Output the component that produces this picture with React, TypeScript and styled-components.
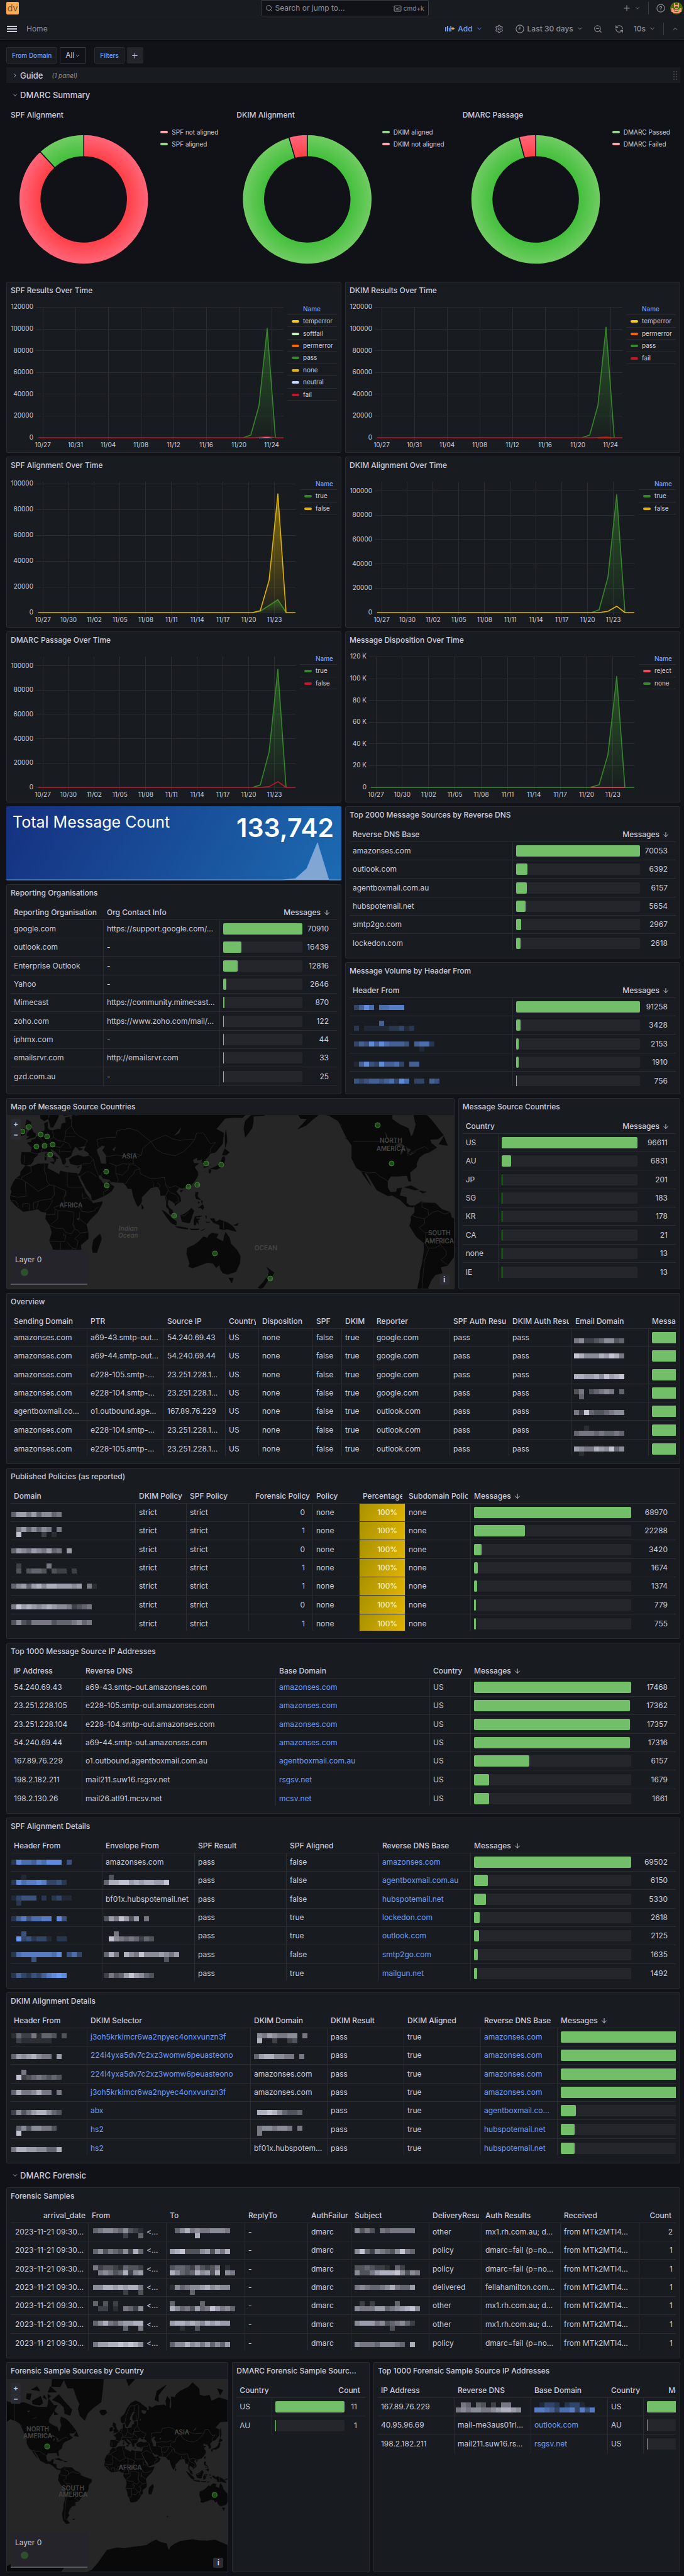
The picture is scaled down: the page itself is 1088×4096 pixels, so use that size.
import React from 'react';
import styled, { createGlobalStyle, css } from 'styled-components';
import { ArrowDown, ChevronDown, ChevronRight, ChevronUp, Keyboard, Plus, RefreshCcw, Search, Settings, ZoomOut } from 'lucide-react';

const c = {
  canvas: '#111217',
  panel: '#181b1f',
  border: '#2a2c31',
  strong: '#3a3c43',
  text: '#ccccdc',
  muted: '#8e8e9a',
  link: '#6e9fff',
  green: '#73bf69',
  track: '#25262b',
};

const Global = createGlobalStyle`
  *, *::before, *::after { box-sizing: border-box; }
  body { margin: 0; background: ${c.canvas}; color: ${c.text}; font-family: Inter, "Liberation Sans", sans-serif; font-size: 12px; line-height: 16px; }
  button, input, select { font: inherit; color: inherit; margin: 0; }
  h1, h2, h3, p { margin: 0; font: inherit; }
  a { color: ${c.link}; text-decoration: none; }
`;

/* ---------- header ---------- */

const TopBar = styled.header`
  display: grid;
  grid-template-columns: 1fr 267px 1fr;
  align-items: center;
  height: 29px;
  padding: 0 2px 2px 10px;
  background: ${c.panel};
  border-bottom: 1px solid ${c.border};
`;

const Logo = styled.a`
  display: grid;
  place-items: center;
  width: 20px;
  height: 20px;
  border-radius: 2px;
  background: #ffab52;
  color: #6a5340;
  font-size: 14px;
  line-height: 18px;
`;

const SearchBox = styled.label`
  display: flex;
  align-items: center;
  gap: 4px;
  height: 26px;
  padding: 0 6px;
  background: ${c.canvas};
  border: 1px solid ${c.strong};
  border-radius: 2px;
  color: ${c.muted};
`;

const SearchInput = styled.input`
  flex: 1;
  min-width: 0;
  padding: 0;
  border: 0;
  outline: 0;
  background: none;
  font-size: 12px;
  &::placeholder { color: ${c.muted}; opacity: 1; }
`;

const Hint = styled.span`
  display: flex;
  align-items: center;
  gap: 3px;
  font-size: 10px;
`;

const Group = styled.div<{ $gap?: number; $end?: boolean }>`
  display: flex;
  align-items: center;
  gap: ${(p) => p.$gap ?? 0}px;
  ${(p) => p.$end && 'justify-content: flex-end;'}
`;

const ToolButton = styled.button<{ $blue?: boolean }>`
  display: flex;
  align-items: center;
  gap: 5px;
  height: 26px;
  padding: 0 8px;
  border: 0;
  background: none;
  color: ${(p) => (p.$blue ? c.link : c.muted)};
  font-weight: 500;
`;

const Divider = styled.span`
  width: 1px;
  height: 20px;
  margin: 0 4px;
  background: ${c.strong};
`;

const NavBar = styled.nav`
  display: flex;
  align-items: center;
  justify-content: space-between;
  height: 34px;
  padding: 0 0 0 3px;
  background: ${c.panel};
  border-bottom: 1px solid ${c.border};
  box-shadow: 0 1px 3px #000;
`;

const HomeLink = styled.a`
  margin-left: 7px;
  color: ${c.muted};
`;

const Bars = styled.span`
  display: grid;
  gap: 2px;
  width: 16px;
  padding-top: 2px;
  &::before, &::after { content: ''; }
  &, &::before, &::after { border-top: 2px solid ${c.text}; }
`;

/* ---------- page ---------- */

const Page = styled.main`
  display: flex;
  flex-direction: column;
  gap: 6px;
  padding: 12px 6px 6px 10px;
`;

const Variables = styled.div`
  display: flex;
  gap: 4px;
  height: 26px;
`;

const VarLabel = styled.label<{ $spaced?: boolean }>`
  display: flex;
  align-items: center;
  padding: 0 8px;
  margin-left: ${(p) => (p.$spaced ? 9 : 0)}px;
  background: ${c.panel};
  border: 1px solid ${c.border};
  border-radius: 2px;
  color: ${c.link};
  font-size: 10px;
  font-weight: 500;
`;

const SelectWrap = styled.span`
  display: grid;
  grid-template-columns: 1fr 10px;
  align-items: center;
  width: 42px;
  padding-right: 7px;
  border: 1px solid ${c.strong};
  border-radius: 2px;
`;

const Select = styled.select`
  appearance: none;
  width: 100%;
  padding: 0 0 0 8px;
  border: 0;
  outline: 0;
  background: none;
`;

const AddFilter = styled.button`
  display: grid;
  place-items: center;
  width: 26px;
  padding: 0;
  border: 0;
  border-radius: 2px;
  background: #24252b;
`;

const RowHead = styled.div<{ $filled?: boolean; $h: number }>`
  display: flex;
  align-items: center;
  justify-content: space-between;
  height: ${(p) => p.$h}px;
  padding: 0 4px 0 9px;
  background: ${(p) => (p.$filled ? c.panel : 'none')};
`;

const RowToggle = styled.button`
  display: flex;
  align-items: center;
  gap: 3px;
  padding: 0;
  border: 0;
  background: none;
  font-size: 13px;
  font-weight: 500;
  line-height: 18px;
`;

const RowNote = styled.em`
  margin-left: 11px;
  color: ${c.muted};
  font-size: 10px;
  font-weight: 400;
`;

const Grid = styled.div`
  display: grid;
  grid-template-columns: repeat(24, minmax(0, 1fr));
  gap: 6px;
`;

const Stack = styled.div<{ $span: number }>`
  grid-column: span ${(p) => p.$span};
  display: flex;
  flex-direction: column;
  gap: 6px;
`;

const PanelBox = styled.section<{ $span: number; $h: number; $clear?: boolean }>`
  grid-column: span ${(p) => p.$span};
  display: flex;
  flex-direction: column;
  min-width: 0;
  height: ${(p) => p.$h}px;
  border: 1px solid ${(p) => (p.$clear ? 'transparent' : c.border)};
  border-radius: 2px;
  background: ${(p) => (p.$clear ? 'none' : c.panel)};
`;

const PanelTitle = styled.h2`
  flex: none;
  height: 26px;
  padding: 0 6px;
  font-size: 12px;
  font-weight: 500;
  line-height: 26px;
  white-space: nowrap;
  overflow: hidden;
  text-overflow: ellipsis;
`;

const PanelBody = styled.div`
  display: flex;
  flex: 1;
  min-height: 0;
  padding: 6px;
`;

const Panel = ({ title, span, h, clear, children }: { title: string; span: number; h: number; clear?: boolean; children: React.ReactNode }) => (
  <PanelBox $span={span} $h={h} $clear={clear}>
    <PanelTitle>{title}</PanelTitle>
    {children}
  </PanelBox>
);

const Swatch = styled.i<{ $c: string }>`
  flex: none;
  display: inline-block;
  width: 12px;
  height: 4px;
  border-radius: 2px;
  background: ${(p) => p.$c};
`;

/* ---------- pies ---------- */

const PieLegend = styled.ul`
  flex: none;
  display: flex;
  flex-direction: column;
  gap: 3px;
  margin: 0;
  padding: 0 9px 0 6px;
  list-style: none;
  font-size: 10px;
  li { display: flex; align-items: center; gap: 6px; }
`;

const PieSvg = styled.svg`
  flex: 1;
  min-width: 0;
  height: 100%;
`;

const arc = (a0: number, a1: number, r: number, ri: number) => {
  const p = (a: number, q: number) => {
    const t = ((a - 90) * Math.PI) / 180;
    return `${(q * Math.cos(t)).toFixed(2)} ${(q * Math.sin(t)).toFixed(2)}`;
  };
  const big = a1 - a0 > 180 ? 1 : 0;
  return `M${p(a0, r)}A${r} ${r} 0 ${big} 1 ${p(a1, r)}L${p(a1, ri)}A${ri} ${ri} 0 ${big} 0 ${p(a0, ri)}Z`;
};

const Pie = ({ id, title, angle, big, labels }: { id: string; title: string; angle: number; big: 'red' | 'green'; labels: [string, string] }) => {
  const small = big === 'red' ? 'green' : 'red';
  const sw = { red: '#ffa6b0', green: '#96d98d' };
  return (
    <Panel title={title} span={8} h={273} clear>
      <PanelBody>
        <PieSvg viewBox="-103 -115 206 233">
          <defs>
            <radialGradient id={`${id}green`} gradientUnits="userSpaceOnUse" cx="0" cy="0" r="102">
              <stop offset=".67" stopColor="#43bf3c" />
              <stop offset="1" stopColor="#70cc62" />
            </radialGradient>
            <radialGradient id={`${id}red`} gradientUnits="userSpaceOnUse" cx="0" cy="0" r="102">
              <stop offset=".67" stopColor="#ff3f47" />
              <stop offset="1" stopColor="#ff6679" />
            </radialGradient>
          </defs>
          <g stroke={c.canvas} strokeWidth="1.5">
            <path d={arc(0, 360 - angle, 103, 68)} fill={`url(#${id}${big})`} />
            <path d={arc(360 - angle, 360, 103, 68)} fill={`url(#${id}${small})`} />
          </g>
        </PieSvg>
        <PieLegend>
          <li><Swatch $c={sw[big]} />{labels[0]}</li>
          <li><Swatch $c={sw[small]} />{labels[1]}</li>
        </PieLegend>
      </PanelBody>
    </Panel>
  );
};

/* ---------- time series ---------- */

const LegendTable = styled.table<{ $w: number; $h: number }>`
  flex: none;
  width: ${(p) => p.$w}px;
  height: ${(p) => p.$h}px;
  border-collapse: separate;
  border-spacing: 0;
  font-size: 10px;
  line-height: 12px;
  th, td { padding: 0; border-bottom: 1px solid ${c.border}; text-align: left; font-weight: 400; }
  thead th { height: 20px; color: ${c.link}; font-weight: 500; }
  td:first-child { width: 25px; padding-left: 7px; line-height: 4px; vertical-align: middle; }
`;

const ChartSvg = styled.svg`
  flex: 1;
  min-width: 0;
  height: 100%;
  font-size: 10px;
  fill: ${c.text};
`;

type Series = { color: string; pts: [number, number][]; fill?: boolean };
type ChartProps = {
  id: string; title: string; w: number; left: number; right: number; yTicks: string[]; step: number;
  xTicks: string[]; x0: number; dx: number; series: Series[]; legend: [string, string][]; lw: number; top: number;
};

const BASE = 215;

const Chart = (p: ChartProps) => {
  const y = (v: number) => BASE - (v / 20000) * p.step;
  return (
    <Panel title={p.title} span={12} h={272}>
      <PanelBody>
        <ChartSvg viewBox={`0 0 ${p.w} 232`} preserveAspectRatio="xMinYMin meet">
          <g stroke="#2b2d31" strokeWidth="1" shapeRendering="crispEdges">
            {p.yTicks.map((_, i) => <path key={i} d={`M${p.left - 4} ${y(i * 20000)}H${p.right}`} />)}
            {p.xTicks.map((_, i) => <path key={i} d={`M${p.x0 + i * p.dx} ${p.top}V${BASE + 4}`} />)}
          </g>
          {p.yTicks.map((t, i) => <text key={t} x={p.left - 8} y={y(i * 20000) + 3} textAnchor="end">{t}</text>)}
          {p.xTicks.map((t, i) => <text key={t} x={p.x0 + i * p.dx} y={230} textAnchor="middle">{t}</text>)}
          {p.series.map((s, i) => {
            const pts = s.pts.map(([a, b]) => `${a} ${y(b)}`).join('L');
            return (
              <g key={i}>
                {s.fill && (
                  <>
                    <linearGradient id={`${p.id}${i}`} x1="0" y1="0" x2="0" y2="1">
                      <stop offset="0" stopColor={s.color} stopOpacity=".55" />
                      <stop offset="1" stopColor={s.color} stopOpacity=".04" />
                    </linearGradient>
                    <path d={`M${pts}Z`} fill={`url(#${p.id}${i})`} />
                  </>
                )}
                <path d={`M${pts}`} fill="none" stroke={s.color} strokeWidth="1.6" strokeLinejoin="round" />
              </g>
            );
          })}
        </ChartSvg>
        <LegendTable $w={p.lw} $h={Math.round(20 + p.legend.length * 19.4)}>
          <thead><tr><th /><th>Name</th></tr></thead>
          <tbody>
            {p.legend.map(([n, col]) => <tr key={n}><td><Swatch $c={col} /></td><td>{n}</td></tr>)}
          </tbody>
        </LegendTable>
      </PanelBody>
    </Panel>
  );
};

const G = '#37872d';
const Y = '#e0b400';
const R = '#c4162a';
const days4 = ['10/27', '10/31', '11/04', '11/08', '11/12', '11/16', '11/20', '11/24'];
const days3 = ['10/27', '10/30', '11/02', '11/05', '11/08', '11/11', '11/14', '11/17', '11/20', '11/23'];
const to120 = ['0', '20000', '40000', '60000', '80000', '100000', '120000'];
const to100 = to120.slice(0, 6);
const wide = { w: 440, left: 44, right: 434, x0: 51, dx: 52, xTicks: days4, yTicks: to120, step: 34.6, top: 7, lw: 79 };
const slim = { w: 460, left: 44, right: 453, x0: 51, dx: 40.94, xTicks: days3, yTicks: to100, top: 7, lw: 59 };

const Charts = () => (
  <>
    <Chart id="a" title="SPF Results Over Time" {...wide}
      series={[
        { color: G, fill: true, pts: [[370, 0], [382, 2500], [395, 29500], [408, 100500], [421, 0]] },
        { color: '#c0d8ff', pts: [[395, 100], [408, 300], [415, 0]] },
        { color: R, pts: [[44, 0], [388, 0], [408, 900], [421, 0], [434, 0]] },
      ]}
      legend={[['temperror', '#f2cc0c'], ['softfail', '#c8f2c2'], ['permerror', '#fa6400'], ['pass', G], ['none', Y], ['neutral', '#c0d8ff'], ['fail', R]]} />
    <Chart id="b" title="DKIM Results Over Time" {...wide}
      series={[
        { color: G, fill: true, pts: [[370, 0], [382, 2500], [395, 29500], [408, 101500], [421, 0]] },
        { color: '#fa6400', pts: [[395, 0], [408, 0], [418, 0]] },
        { color: R, pts: [[44, 0], [388, 0], [408, 500], [421, 0], [434, 0]] },
      ]}
      legend={[['temperror', '#f2cc0c'], ['permerror', '#fa6400'], ['pass', G], ['fail', R]]} />
    <Chart id="c" title="SPF Alignment Over Time" {...slim} step={41}
      series={[
        { color: G, fill: true, pts: [[385, 0], [397, 1000], [411, 5500], [425, 10000], [438, 0]] },
        { color: Y, fill: true, pts: [[44, 0], [385, 0], [397, 1500], [411, 25000], [425, 92000], [438, 0], [453, 0]] },
      ]}
      legend={[['true', G], ['false', Y]]} />
    <Chart id="d" title="DKIM Alignment Over Time" {...slim} step={38.7}
      series={[
        { color: G, fill: true, pts: [[385, 0], [397, 2300], [411, 29000], [425, 97000], [438, 0]] },
        { color: Y, pts: [[44, 0], [397, 0], [411, 1000], [425, 5200], [438, 0], [453, 0]] },
      ]}
      legend={[['true', G], ['false', Y]]} />
    <Chart id="e" title="DMARC Passage Over Time" {...slim} step={38.7}
      series={[
        { color: G, fill: true, pts: [[385, 0], [397, 2000], [411, 29000], [425, 97000], [438, 0]] },
        { color: R, pts: [[44, 0], [397, 0], [411, 600], [425, 4700], [438, 0], [453, 0]] },
      ]}
      legend={[['true', G], ['false', R]]} />
    <Chart id="f" title="Message Disposition Over Time" {...slim} left={35} x0={42} dx={41.87} step={34.6}
      yTicks={['0', '20 K', '40 K', '60 K', '80 K', '100 K', '120 K']}
      series={[
        { color: G, fill: true, pts: [[34, 0], [383, 0], [397, 2500], [411, 30000], [425, 102000], [438, 0], [453, 0]] },
        { color: '#f2495c', pts: [[384, 0], [438, 0]] },
      ]}
      legend={[['reject', '#f2495c'], ['none', G]]} />
  </>
);

/* ---------- stat ---------- */

const StatBox = styled.section`
  display: grid;
  height: 118px;
  border-radius: 2px;
  overflow: hidden;
  background: linear-gradient(120deg, #15307f, #1c6bb2);
  color: #fff;
  > * { grid-area: 1 / 1; }
`;

const StatText = styled.div`
  display: flex;
  justify-content: space-between;
  padding: 9px 12px 0 10px;
`;

const StatName = styled.h2`
  font-size: 25px;
  line-height: 32px;
`;

const StatValue = styled.p`
  font-size: 41px;
  font-weight: 600;
  line-height: 50px;
`;

const Spark = styled.svg`
  width: 100%;
  height: 100%;
`;

/* ---------- tables ---------- */

const Clip = styled.div`
  flex: 1;
  min-width: 0;
  margin-bottom: 6px;
  overflow: hidden;
`;

const DataTable = styled.table<{ $closed?: boolean }>`
  width: 100%;
  table-layout: fixed;
  border-collapse: separate;
  border-spacing: 0;
  thead th { height: 24px; padding: 0 5px; border-bottom: 1px solid ${c.border}; }
  tbody tr:nth-child(3n) td { height: 30px; }
  ${(p) => !p.$closed && css`tbody tr:last-child td { border-bottom: 0; }`}
  td:last-child { border-right: 0; }
`;

const Head = styled.div<{ $end?: boolean; $pad?: number }>`
  display: flex;
  align-items: center;
  gap: 4px;
  justify-content: ${(p) => (p.$end ? 'safe flex-end' : 'flex-start')};
  padding-right: ${(p) => p.$pad ?? 0}px;
  overflow: hidden;
  white-space: nowrap;
  font-weight: 500;
`;

const Cell = styled.td<{ $end?: boolean; $pad?: number; $hot?: boolean }>`
  height: 29px;
  padding: 0 ${(p) => 5 + (p.$pad ?? 0)}px 0 5px;
  border-right: 1px solid ${c.border};
  border-bottom: 1px solid ${c.border};
  text-align: ${(p) => (p.$end ? 'right' : 'left')};
  white-space: nowrap;
  overflow: hidden;
  ${(p) => p.$hot && css`background: linear-gradient(120deg, #a89100, #e0b400); color: #f7f5e6;`}
`;

const BarRow = styled.div`
  display: flex;
  align-items: center;
`;

const Track = styled.div`
  flex: 1;
  height: 18px;
  border-radius: 2px;
  background: ${c.track};
`;

const Fill = styled.div<{ $dim?: boolean }>`
  min-width: 1px;
  height: 100%;
  border-radius: 2px;
  background: ${(p) => (p.$dim ? '#a3a5a8' : c.green)};
`;

const BarValue = styled.span<{ $w: number }>`
  flex: none;
  width: ${(p) => p.$w}px;
  padding-right: 8px;
  text-align: right;
`;

type Mosaic = { m: string[]; y: number; x?: number; blue?: boolean; w?: number; after?: string };
type Bar = { bar: number; v: string; dim?: boolean };
type CellData = string | Mosaic | Bar;
type Col = { h: string; w?: number; end?: boolean; hpad?: number; pad?: number; link?: boolean; sort?: boolean; hot?: boolean; slot?: number };

const WithText = styled.span`
  display: flex;
  align-items: center;
  height: 28px;
`;

const Redacted = ({ d }: { d: Mosaic }) => (
  <WithText>
    <svg width={d.w ?? 104} height="28" overflow="visible" fill={d.blue ? '#6e9fff' : '#ccccdc'} shapeRendering="crispEdges">
      {d.m.map((row, r) =>
        row.split('').map((ch, i) =>
          ch === '.' ? null : <rect key={`${r}-${i}`} x={(d.x ?? 0) + i * 8} y={d.y + r * 8} width="8" height="8" opacity={Number(ch) / 9.5} />,
        ),
      )}
    </svg>
    {d.after}
  </WithText>
);

const m = (y: number, x: number, ...rows: string[]): Mosaic => ({ y, x, m: rows });
const b = (y: number, x: number, ...rows: string[]): Mosaic => ({ y, x, m: rows, blue: true });

const Table = ({ cols, rows, closed }: { cols: Col[]; rows: CellData[][]; closed?: boolean }) => (
  <PanelBody>
    <Clip>
      <DataTable $closed={closed}>
        <colgroup>{cols.map((k) => <col key={k.h} style={k.w ? { width: k.w } : undefined} />)}</colgroup>
        <thead>
          <tr>
            {cols.map((k) => (
              <th key={k.h} scope="col">
                <Head $end={k.end} $pad={k.hpad}>{k.h}{k.sort && <ArrowDown size={12} />}</Head>
              </th>
            ))}
          </tr>
        </thead>
        <tbody>
          {rows.map((r, i) => (
            <tr key={i}>
              {r.map((d, j) => {
                const k = cols[j];
                return (
                  <Cell key={j} $end={k.end && typeof d === 'string'} $pad={k.pad} $hot={k.hot}>
                    {typeof d === 'string' ? (k.link ? <a href="#row">{d}</a> : d)
                      : 'm' in d ? <Redacted d={d} />
                      : (
                        <BarRow>
                          <Track><Fill $dim={d.dim} style={{ width: `${d.bar}%` }} /></Track>
                          <BarValue $w={k.slot ?? 44}>{d.v}</BarValue>
                        </BarRow>
                      )}
                  </Cell>
                );
              })}
            </tr>
          ))}
        </tbody>
      </DataTable>
    </Clip>
  </PanelBody>
);

const bars = (vals: number[], max = vals[0], dimBelow = 0): Bar[] =>
  vals.map((v) => ({ bar: (v / max) * 100, v: String(v), dim: v < dimBelow }));

const dnsRows = (() => {
  const n = ['amazonses.com', 'outlook.com', 'agentboxmail.com.au', 'hubspotemail.net', 'smtp2go.com', 'lockedon.com'];
  const v = bars([70053, 6392, 6157, 5654, 2967, 2618]);
  return n.map((s, i) => [s, v[i]]);
})();

const orgRows = (() => {
  const n = [['google.com', 'https://support.google.com/…'], ['outlook.com', '-'], ['Enterprise Outlook', '-'], ['Yahoo', '-'], ['Mimecast', 'https://community.mimecast…'],
    ['zoho.com', 'https://www.zoho.com/mail/…'], ['iphmx.com', '-'], ['emailsrvr.com', 'http://emailsrvr.com'], ['gzd.com.au', '-']];
  const v = bars([70910, 16439, 12816, 2646, 870, 122, 44, 33, 25], 70910, 200);
  return n.map((s, i) => [...s, v[i]]);
})();

const volumeRows = (() => {
  const n = [b(11, 2, '3586.66777'), b(7, 2, '.....5', '2.1111122312'), b(10, 2, '35485865554.5662', '.............1'), b(13, 2, '1584385563.55'), b(10, 2, '43455456386.33.54')];
  const v = bars([91258, 3428, 2153, 1910, 756]);
  return n.map((s, i) => [s, v[i]]);
})();

const countryRows = (() => {
  const n = ['US', 'AU', 'JP', 'SG', 'KR', 'CA', 'none', 'IE'];
  const v = bars([96611, 6831, 201, 183, 178, 21, 13, 13]);
  return n.map((s, i) => [s, v[i]]);
})();

const overviewRows: CellData[][] = (
  [
    ['amazonses.com', 'a69-43.smtp-out…', '54.240.69.43', 'google.com', m(15, -2, '5622346634')],
    ['amazonses.com', 'a69-44.smtp-out…', '54.240.69.44', 'google.com', m(10, -2, '9866687985')],
    ['amazonses.com', 'e228-105.smtp-…', '23.251.228.1…', 'google.com', m(13, -2, '8877869789')],
    ['amazonses.com', 'e228-104.smtp-…', '23.251.228.1…', 'google.com', m(8, -2, '35.34565.4', '.4')],
    ['agentboxmail.co…', 'o1.outbound.age…', '167.89.76.229', 'outlook.com', m(12, -2, '5294334566')],
    ['amazonses.com', 'e228-104.smtp-…', '23.251.228.1…', 'outlook.com', m(7, -2, '..1', '4555454454')],
    ['amazonses.com', 'e228-105.smtp-…', '23.251.228.1…', 'outlook.com', m(10, -2, '7655876946', '.1')],
  ] as [string, string, string, string, Mosaic][]
).map(([d, p, ip, r, e]) => [d, p, ip, 'US', 'none', 'false', 'true', r, 'pass', 'pass', e, { bar: 100, v: '' }]);

const policyRows: CellData[][] = (() => {
  const n: [Mosaic, string][] = [
    [m(13, -4, '4775746645'), '0'], [m(8, -4, '.5746465.5', '.9....2.1'), '1'], [m(12, -4, '4765765745.7'), '0'], [m(7, -4, '.2.....5', '.3.3443.322.2'), '1'],
    [m(10, -4, '46747868877767.51'), '1'], [m(13, -4, '5978767876652345'), '0'], [m(8, -4, '3632555534445645'), '1'],
  ];
  const v = bars([68970, 22288, 3420, 1674, 1374, 779, 755]);
  return n.map(([d, f], i) => [d, 'strict', 'strict', f, 'none', '100%', 'none', v[i]]);
})();

const ipRows: CellData[][] = (() => {
  const n = [
    ['54.240.69.43', 'a69-43.smtp-out.amazonses.com', 'amazonses.com'], ['23.251.228.105', 'e228-105.smtp-out.amazonses.com', 'amazonses.com'],
    ['23.251.228.104', 'e228-104.smtp-out.amazonses.com', 'amazonses.com'], ['54.240.69.44', 'a69-44.smtp-out.amazonses.com', 'amazonses.com'],
    ['167.89.76.229', 'o1.outbound.agentboxmail.com.au', 'agentboxmail.com.au'], ['198.2.182.211', 'mail211.suw16.rsgsv.net', 'rsgsv.net'],
    ['198.2.130.26', 'mail26.atl91.mcsv.net', 'mcsv.net'],
  ];
  const v = bars([17468, 17362, 17357, 17316, 6157, 1679, 1661]);
  return n.map((s, i) => [...s, 'US', v[i]]);
})();

const spfRows: CellData[][] = (() => {
  const n: [Mosaic, CellData, string, string][] = [
    [b(10, -4, '2866576888.4'), 'amazonses.com', 'false', 'amazonses.com'],
    [b(5, -4, '..1', '28677873342'), m(5, -3, '.3', '4889978788779'), 'false', 'agentboxmail.com.au'],
    [b(8, -4, '1344402.2311', '.2'), 'bf01x.hubspotemail.net', 'false', 'hubspotemail.net'],
    [b(12, -4, '25746677.84'), m(12, -3, '3759737.5'), 'true', 'lockedon.com'],
    [b(7, -4, '..4', '.9342331.22'), m(7, -3, '..5', '.965454243'), 'true', 'outlook.com'],
    [b(10, -4, '2677777768.463', '....4'), m(10, -3, '485.86596667657', '............3'), 'false', 'smtp2go.com'],
    [b(13, -4, '25324357898'), m(13, -3, '2534797643'), 'true', 'mailgun.net'],
  ];
  const v = bars([69502, 6150, 5330, 2618, 2125, 1635, 1492]);
  return n.map(([h, e, a, d], i) => [h, e, 'pass', a, d, v[i]]);
})();

const dkimRows: CellData[][] = (
  [
    [m(8, -4, '142251443.3', '.2111111'), 'j3oh5krkimcr6wa2npyec4onxvunzn3f', m(8, 5, '65765566.5', '8..2..23'), 'amazonses.com', 100],
    [m(12, -4, '47678655.7'), '224i4yxa5dv7c2xz3womw6peuasteono', m(12, 0, '47886655.5'), 'amazonses.com', 100],
    [m(7, -4, '..5', '.923454343'), '224i4yxa5dv7c2xz3womw6peuasteono', 'amazonses.com', 'amazonses.com', 100],
    [m(10, -4, '48556855.5'), 'j3oh5krkimcr6wa2npyec4onxvunzn3f', 'amazonses.com', 'amazonses.com', 100],
    [m(13, -4, '2635788643'), 'abx', m(13, -3, '.889864334'), 'agentboxmail.co…', 12],
    [m(8, -4, '.46366553', '.9'), 'hs2', m(8, -3, '.5665665.5', '.5'), 'hubspotemail.net', 11],
    [m(12, -4, '5887766448'), 'hs2', 'bf01x.hubspotem…', 'hubspotemail.net', 11],
  ] as [Mosaic, string, CellData, string, number][]
).map(([h, s, d, r, v]) => [h, s, d, 'pass', 'true', r, { bar: v, v: '' }]);

const forensicRows: CellData[][] = (
  [
    [['4566546321', '......2..4'], 8, ['.46856556665', '.....8'], ['6353.5455555'], 'other', 'mx1.rh.com.au; d…', '2'],
    [['4635436284'], 12, ['789333673758'], ['694265436954'], 'policy', 'dmarc=fail (p=no…', '1'],
    [['5233214332', '.565348267'], 8, ['3443253235.1', '8643486738.65'], ['3343221.42', '6335788896365'], 'policy', 'dmarc=fail (p=no…', '1'],
    [['6688787885', '......2..3'], 10, ['164566786766', '....4'], ['565445685447'], 'delivered', 'fellahamilton.com…', '1'],
    [['4.3.2', '.22.1.5426'], 7, ['4.....4', '8645374597564'], ['.2.2....4', '6555774567896'], 'other', 'mx1.rh.com.au; d…', '1'],
    [['4685467788', '......4..5'], 8, ['788787687877', '..1..3'], ['677756345642', '.......3'], 'other', 'mx1.rh.com.au; d…', '1'],
    [['5778898986'], 12, ['466867574647'], ['6555466654.8'], 'policy', 'dmarc=fail (p=no…', '1'],
  ] as [string[], number, string[], string[], string, string, string][]
).map(([f, y, t, s, d, a, n]) => [
  '2023-11-21 09:30…', { m: f, y, x: 2, w: 87, after: '<…' }, m(y, 0, ...t), '-', 'dmarc', m(y, 0, ...s), d, a, 'from MTk2MTI4…', n,
]);

/* ---------- maps ---------- */

const LAND = [
  '-9,37 -9.5,39 -8.8,43.5 -1.8,43.4 -1.2,46 -4.7,48.4 -1.5,48.7 -1.5,49.7 1.5,50.2 2,51 4,52 5,53.4 8,53.8 8.5,55 8,57 10.5,57.7 10.5,55 12,54.3 14,54 18,54.7 20,54.5 21,57 24,57.3 23.5,59.3 29.5,59.8 28,60.5 22.5,60 21.3,61 21.5,63 25,65.3 22,65.8 17.5,62 17.2,60.5 18.8,60 16.5,57.5 14.5,55.5 12.8,55.5 11,59 8,58 5.3,59 5,62 10,64 14,67.5 19,70 25.5,71.1 31,70.3 41,67.5 40.5,66.3 33,66.6 34,65 37,64 40,64.7 41,66.5 44,66.3 44,68.5 48,67.7 53,68.8 60,69 65,69.2 68,68.3 67,71 69,73 73,71.5 72,68 74,67 75,69 74.5,72.8 80,72.5 81,73.6 87,75 98,76.3 104,77.7 113,75.8 113.5,73.6 120,73 127,73.5 130,71 140,72.4 150,71.6 160,69.8 170,69 180,68.9 190,66 188,64.5 180,64.5 177,62.5 171,60 163,59.8 163,57.5 162,55 157,51 156,55 157,58 162,60.5 160,61.7 155,59.3 148,59.3 142,59 135.5,54.7 141,53 140.3,48 135,43.5 131,42.8 129.5,41 127.5,39.7 129.4,37 129,35.2 126.4,34.5 126.6,37 125,38 125,39.5 121.5,39 121.5,40.7 118,39.2 119,37.3 122.5,37.2 119.3,35 121.8,32 122,30 121,28 119,25.5 116.5,23 113.5,22.2 110.3,21.2 108,21.7 105.8,19 108.8,15.3 109.3,12 106.8,10.4 105,8.7 105,10.2 102.5,12 101,12.8 100,13.4 99.3,10 100.5,7.2 103,5.5 104,1.5 101,2.8 100.3,6 98.3,8 98.6,11 97.5,16.3 94.3,16 94,19.5 91.8,22.4 87,21.5 82,16.5 80.2,15 80.2,12 79.5,10.3 77.5,8 76,10.5 74,15.5 72.8,21 70,20.9 69,22.5 66.7,25 61.5,25.2 57.3,25.7 56.5,27 51.5,27.9 50,30 48,30 48.5,28 50.2,26.5 51.5,24.5 54.5,24.2 56.3,26 57,24 59.8,22.4 57.8,19 55,17.3 52,15.6 45,12.8 43.4,12.8 42.7,16.5 39,21 37,25 35,28 35,29.5 32.5,30 34.3,31.3 36,34.7 36,36.8 32.5,36.1 30.5,36.4 27.5,37 26.3,39.3 29,41 33,42 37,41 41.5,41.5 41,43 37.5,44.7 39,47 35,46.3 33,46.1 36.6,45.3 34,44.4 33,45.5 31,46.6 28.7,44 28,41.8 26,40.8 23.5,40.3 24,38 22.8,36.5 21.5,37 21,39 19.4,41.5 17,43.3 13.7,45.1 12.3,45.2 14,42.5 18.5,40.2 16.5,39.7 16.5,38.5 15.8,38 15,40 12.3,41.7 10.3,43.8 8,44 3.2,43.2 3,41.8 0,40 0,38.8 -2,36.8 -5.5,36.1',
  '-6,35.8 -2,35.1 3,36.9 11,37.1 10.2,34.3 15,32.3 19,30.4 20,32.7 25,31.6 32.3,31.2 32.6,29.9 35.5,24 37.3,21 38.5,18 43,12.3 44,10.5 51.2,11.8 50.5,9.5 47.5,4 42,-1.5 39.2,-5 40.5,-11 40.5,-15.5 35,-20 35.4,-24 32.8,-26.5 31,-29.8 27,-33.6 20,-34.8 18.3,-34 17.5,-30.5 15,-27 14.3,-22 11.8,-17 13.7,-11 12.2,-5.8 9,-1 9.6,3.8 6,4.3 3,6.3 -3,5 -7.6,4.4 -13,8.5 -16.7,12.5 -17.4,14.7 -16.2,19 -17,21 -14.5,26 -13,27.7 -9.7,30 -9.5,32',
  '-5.5,50 1.3,51.2 1.6,52.7 0,53.2 -2,56 -2,57.6 -5,58.6 -6,56.5 -3,54 -4.6,53 -5,51.8 -3,51.4', '-10,51.6 -6.3,52.2 -5.6,54.5 -8,55.2 -10,54',
  '-22,64 -18.5,63.4 -13.6,65 -16,66.5 -22.5,66.4 -24,65.5', '12.5,38 15.6,38.2 15,36.7', '8.3,41 9.6,41 9.5,39.1 8.5,39', '8.6,42.4 9.5,43 9.3,41.5', '23.6,35.5 26.3,35.2 24.5,34.9', '32.3,35 34.5,35.6 33,34.6',
  '49.3,-12 50.4,-15.5 47,-25 44,-25 43.4,-22 44.5,-16.2', '80,9.7 81.8,7.3 80.5,6', '95.3,5.6 98,4 103.5,-1 106,-3 105.8,-5.8 102,-4 98.5,0.5',
  '105.2,-6.7 108.5,-6.8 114.5,-7.8 114.4,-8.6 108,-7.8', '116,-8.3 119,-8.4 123,-8.4 122,-9 117,-9', '124,-9.8 127,-8.4 125,-9.5', '109,1.5 111.5,2.5 115,5 117,7 119,5 117.5,1 116,-3.8 114.5,-4 110.2,-3',
  '119,-5.5 119,-2 119.8,0.8 124.8,1.3 123,.4 120.3,.4 121,-1 123.3,-1 121.8,-2 122.5,-5 121,-3 120.3,-5.5', '127.5,1.5 128.5,1 128,-.8', '128,-3.2 130.8,-3.4 128.5,-3.6',
  '131,-0.8 134,-.8 135,-3.3 138,-1.6 144,-3.8 147.5,-6.2 150.5,-10.3 147,-9.5 143.5,-8.5 141,-9.1 138,-8.3 138,-5.5 133.5,-3.8 132.5,-2.5', '148.5,-5.7 152,-4.2 151,-6',
  '120.3,18.4 122.2,18.3 121.5,15.5 124,13 120.7,13.8 119.9,16', '122,7 125.5,9.6 126.4,7.5 125.3,5.8 123.8,7.4', '122,11.8 123.2,11 122.3,10.4', '124.4,12.4 125.3,12.3 125,10.2', '121,25.2 121.9,24.8 120.8,22 120.1,23.3', '108.7,19.5 110.8,20 109.5,18.3',
  '131,34 135.8,35.6 139,38 140,40.7 141.5,41.3 142,39.5 140.7,35.8 139,34.8 135.8,33.6', '130,33.6 131.8,33.3 131,31.2 130.2,31.5', '140,42 141.8,45.4 145.2,43.5 143,42', '142.2,46 143.5,49 142.8,54.3 142,52',
  '114,-22 113.5,-26 115.7,-32 115,-34.2 118,-35 124,-33.2 129,-31.6 133,-32 135.5,-34.8 138,-33 138.5,-35.6 140.5,-38 144,-38.8 147,-38 150,-37.3 153,-32 153.4,-27.5 150.8,-23.3 146.3,-19 145.3,-15 142.5,-10.8 141.5,-13.5 140.8,-17.5 137.5,-16 135.5,-14.8 137,-12.2 132.5,-11.3 130,-13 129,-15 126,-14 122.5,-17.5 119,-20',
  '144.8,-40.8 148.2,-40.9 147,-43.6', '173,-34.5 178.4,-37.8 175.3,-41.5 173.8,-39.3 174.7,-37', '172.7,-40.6 174.2,-41.8 170.5,-45.8 168.5,-46.6 166.5,-46 170.5,-43',
  '-168,65.7 -162,66.5 -166.5,68.3 -156.5,71.3 -141,69.7 -128,70.3 -115,68.5 -108,68 -96,68 -94,72 -87,69 -82,69 -86,66.5 -94,61 -94,58.7 -88,56.5 -82,55 -80,51.3 -78.5,52.5 -76.5,56.5 -78,60 -77,62.5 -70,61 -65,58.5 -60,55 -56,52 -60,50.2 -66,50 -65,48.2 -61,46 -66,43.7 -70.5,42.5 -74,40.5 -76,37 -76,35 -81,31.5 -80.2,26 -81.8,26 -83,29.7 -89.5,29.3 -95,29.3 -97.5,26 -97.5,22 -95.5,18.5 -91,18.7 -90.3,21 -87,21.5 -88.5,16 -83.5,15 -83.5,11 -81,8.8 -77.5,8.8 -78.5,7.6 -83,8.2 -86,11 -88,13 -94,16.2 -97,15.8 -105.5,20 -109,25.5 -113,31.2 -114.8,31.5 -112,27 -109.8,23 -115,29.5 -117.2,32.7 -120.6,34.6 -124,40 -124,47 -128,51 -134,58 -140,59.8 -147,61 -152,59 -158,56.2 -164,54.7 -157,58.8 -162,59 -165,61.5 -161,64.5',
  '-77.5,8.7 -72,12 -71.5,11 -62,10.6 -57,6 -51,4 -50,0 -44,-2.6 -35.2,-5.5 -35,-9 -39,-13 -39.5,-18 -41,-22 -48,-25.5 -48.7,-28.5 -53,-33.5 -58,-34.5 -57,-38 -62,-39 -65,-42 -67.5,-46 -65.8,-48 -69,-51 -68.5,-52.3 -65.2,-54.7 -70,-55.3 -74,-52.5 -75.5,-47 -73.5,-41 -73.3,-37 -71.5,-31 -70.3,-23 -70.5,-18.5 -76.2,-14 -81.2,-6 -80,-2.5 -80,0.8 -77.3,4',
  '-73,78.5 -68,76 -60,76 -55,72 -51.5,69.5 -53.5,67 -51,63 -44.5,60 -40.5,64.5 -33,67.5 -22,70.5 -20,75 -18,80 -35,83 -60,82', '-80,73.7 -73,71 -62,66.8 -64.5,63.3 -72,64.3 -73,67.8 -79,70 -89,71.5', '-117,71 -105,73 -102,70 -106,69 -116,69.5',
  '-88,82 -62,82.3 -78,76.4 -90,76.5', '-125,72 -120,71.5 -118,74 -124,74', '-100,73.5 -97,71.7 -102,72.5', '-95,74.5 -83,74.6 -92,76.5', '-118,75.5 -106,75 -110,76.5', '-95,73.8 -91,73 -95,72', '-87,66 -81,64 -86,63.6', '-59.3,47.7 -55.7,51.4 -53,47', '-85,22 -80,23 -74.5,20.2 -77.5,20', '-74,19.5 -68.7,18.7 -71.5,17.8',
  '52,71.5 55,75 68,77 57,73.5 57,70.7', '12,79 20,80 24,78.5 16,76.7', '138,75.8 146,75.3 142,73.5', '-61,-51.3 -58,-51.4 -60,-52.2', '68.7,-49 70.3,-49 69.5,-49.7', '-129,50.8 -123.5,48.4 -126,49.5',
  '-180,-84 -180,-78 -150,-77 -130,-74 -100,-73 -75,-73 -66,-67 -58,-63.5 -61,-68 -63,-74 -78,-79 -60,-80 -35,-78.3 -26,-76 -17,-72.5 -14,-71.2 0,-70 10,-70.3 30,-69.3 40,-69 48,-67 54,-66 60,-67.3 68,-68 71,-71.3 74,-69.5 80,-68 88,-66.7 100,-66 104,-65.8 113,-66.4 125,-66.5 135,-66 150,-68.5 170,-71.5 165,-78 180,-78 180,-84',
];

const LAKES = [
  '47,45 51,47 53,46.5 51,44.5 53.5,42 53.8,37 50,37.2 49,40.5 47.5,43', '58.3,45 61,46.5 60,44', '104,51.6 108,53 109.7,55.5 106,53', '31.8,-1 34,0 33.5,-2.4', '29.2,-3.5 31,-8.3 29.8,-6',
  '-92,46.8 -88,48.6 -84.5,46.6 -88,46.8', '-88,42 -87.5,45 -85,46 -86.5,43', '-84,46 -80,45 -82.2,43', '-83,41.6 -79,43 -76.3,43.7 -80,42', '-124,66 -119,66.3 -122,65', '-117,61 -109,62.8 -114,61.2', '-99,53.5 -97,50.5 -98.5,51', '27.5,66 27,58.8 28,58.8', '30.5,60.2 32.8,61.3 32.5,60',
];

const BORDERS = [
  '48,46 47,50 55,51 61,51 62,54 71,55 77,54 83,51 87,49 92,50.5 98,52 103,50.3 108,49.5 116,50 119.5,50 121,53 126,53 131,48 135,48.5 131,45 131,43', '87,49 91,45 96,43 105,41.6 111,43.7 116,47 119.5,50',
  '80,42 74,40 74,37 79,34 79,31 86,28 92,28 97,28.5 98,24 101,21.5 105,23 108,21.7', '53,41.5 56,41.3 61,42 68,41.5 74,43 80,42 81,45.5 87,49', '56,37.5 61,36 61,31 63,27 62,25.2', '61,35.5 66,37 71,36.8 74,37', '61,31 66,30 70,33.5 71,36.8', '68,24 71,28 74.5,31 75,33 79,34',
  '44.5,39.5 45.5,35.5 48,30', '36,36.8 42,37.3 44.5,39.5 41.5,41.5', '35,29.5 39,32 42,32 47,29', '52,15.6 52,19 55,20 55.5,22.5 52,23', '25,31.6 25,22 37,22', '-8.7,27.3 -5,25 1.2,21 3.2,19 12,23.5 15,23 24,19.5 24,15.7', '8.3,36.9 8,33 9.5,30 9.5,26.5 12,23.5',
  '-2,35 -1.5,32 -8.7,28.7 -8.7,27.3 -13,27.7', '-5,25 -6,25 -5.5,15.5 -12,15 -17,16', '15,23 15.5,17 13.5,14', '3.6,12 7,13 13.5,13.7', '24,19.5 22.5,14 23,11 28,9.5 33,10 34,8', '36.5,18 36.5,14 40,14.5 43,12', '34,8 36,4.5 41,4 45,5 48,8', '34,4 34,-1 39,-4.7',
  '15,7.5 18,5 24,5 30,4 30,-1 29,-5 30.5,-8.5 28,-12 24,-11 22,-8 17,-8 12.5,-6', '18,5 18,-1 13,-5', '12,-17.3 18,-17.5 23,-17.6 24,-13 22,-13 22,-11', '30.5,-8.5 33,-9.5 34.5,-11.5 40.5,-10.5', '34.5,-12 30.5,-15.5 33,-17 32,-22 31,-22.4 32,-26.8', '20,-18 20,-28 17,-28.5', '20,-25 25,-25.5 29.5,-22.2 31,-22.4', '25,-17.8 27,-20.5 29.5,-22.2',
  '8.5,4.8 11,7 13.5,11 14,13', '15,7.5 19,9 23,11', '-3,5 -3,10 -5,10.5 -8,10 -8,7.5', '0,6 0,11 3.6,12', '2,6.4 3,9 3.6,12', '-11,8 -13,12 -16,12.5', '9.8,2 16,2 16,7',
  '-123,49 -95,49 -89,48 -83,46 -82.5,42.5 -79,43.5 -75,45 -70,46.5 -67,45', '-141,70 -141,60 -131,56', '-117,32.5 -111,31.3 -106.5,31.7 -103,29 -99.5,27.5 -97.3,26', '-51,4 -55,2.5 -60,5 -64,4 -67,1.5 -70,-1 -70,-4.5 -74,-7.5 -70,-11 -65,-11 -60,-15 -58,-20 -54,-24 -54,-27 -58,-30 -53,-33',
  '-70,-18 -67,-23 -70,-30 -71,-38 -72,-47 -72,-51 -68.5,-52.4', '-70,-1 -75,0 -79,1.5', '-72,12 -72,7.5 -67.5,6 -67,1.5', '-69.5,-17.5 -69,-11', '-67,-22 -62.5,-22 -58,-20',
  '-1.8,43.4 3,42.5', '-7,42 -7,37.2', '6,43.5 7,47.5 8,49 6,50 3,51', '7,53.5 6,51', '14,54 15,51 12,50 13.5,48.5 10,47.5 7,47.5', '24,54 23.5,51.5 22.5,49 18,49.5 15,51', '7,46 10.5,46.5 13.5,46.5 16,46.5 20,46 22.5,48', '19,45 19.5,42.5', '22.5,49 26,48 28,45.5', '20,44 22.5,44 28,44', '28,59.5 28,56 31,53 34,51.5 40,49.5 38,47', '24,54 28,56', '23.5,51.5 31,51.5',
  '11,59 12.5,63 18,68.5 25,69 30,69.7', '24,66 24,68.5', '30,69 30,62 28,60.5', '97.5,24 100,20 98,16 99,12', '100,20 102,18 105,17 107,15 107.5,12 105,11', '88.5,26 89,22 ', '92,25 94,23 92.5,21', '141,-2.5 141,-9', '109.7,1.5 112,1.2 115,4',
];

const MapFrame = styled.div`
  position: relative;
  flex: 1;
  min-height: 0;
  overflow: hidden;
  background: #262626;
`;

const MapSvg = styled.svg`
  display: block;
  width: 100%;
  height: 100%;
  font-size: 10px;
  font-weight: 600;
`;

const ZoomButtons = styled.div`
  position: absolute;
  top: 6px;
  left: 6px;
  display: grid;
  gap: 1px;
`;

const MapButton = styled.button`
  display: grid;
  place-items: center;
  width: 16px;
  height: 16px;
  padding: 0;
  border: 0;
  border-radius: 2px;
  background: #2a2b33;
  color: ${c.text};
  font-weight: 700;
`;

const InfoSpot = styled.div`
  position: absolute;
  right: 7px;
  bottom: 6px;
`;

const LayerLegend = styled.div`
  position: absolute;
  left: 6px;
  bottom: 6px;
  width: 122px;
  height: 56px;
  padding: 8px 7px;
  background: #24242a;
  border-bottom: 2px solid #57585f;
`;

const LayerDot = styled.i`
  display: block;
  width: 12px;
  height: 12px;
  margin: 6px 0 0 9px;
  border-radius: 50%;
  background: #2f4f2f;
`;

type MapProps = { w: number; h: number; lon0: number; eq: number; k: number; marks: [number, number][]; labels: [number, number, string, boolean?][] };

const WorldMap = ({ w, h, lon0, eq, k, marks, labels }: MapProps) => {
  const r = (k * 180) / Math.PI;
  const path = (s: string, close: boolean) =>
    'M' + s.trim().split(' ').map((q) => {
      const [lo, la] = q.split(',').map(Number);
      return `${(lon0 + lo * k).toFixed(1)} ${(eq - r * Math.log(Math.tan(Math.PI / 4 + (la * Math.PI) / 360))).toFixed(1)}`;
    }).join('L') + (close ? 'Z' : '');
  const land = LAND.map((s) => path(s, true)).join('');
  const lakes = LAKES.map((s) => path(s, true)).join('');
  const lines = BORDERS.map((s) => path(s, false)).join('');
  return (
    <MapFrame>
      <MapSvg viewBox={`0 0 ${w} ${h}`} preserveAspectRatio="xMidYMid slice">
        {[0, 360 * k].map((dx) => (
          <g key={dx} transform={`translate(${dx} 0)`}>
            <path d={land} fill="#090909" stroke="#090909" strokeWidth=".6" strokeLinejoin="round" />
            <path d={lakes} fill="#262626" />
            <path d={lines} fill="none" stroke="#242424" strokeWidth=".9" strokeLinejoin="round" />
          </g>
        ))}
        {labels.map(([x, y, t, it], i) => (
          <text key={i} x={x} y={y + 4} textAnchor="middle" fill="#454545" fontStyle={it ? 'italic' : 'normal'}>{t}</text>
        ))}
        {marks.map(([x, y], i) => <circle key={i} cx={x} cy={y} r="4" fill="#37872d" fillOpacity=".5" stroke="#37872d" />)}
      </MapSvg>
      <ZoomButtons>
        <MapButton aria-label="Zoom in">+</MapButton>
        <MapButton aria-label="Zoom out">−</MapButton>
      </ZoomButtons>
      <LayerLegend>Layer 0<LayerDot /></LayerLegend>
      <InfoSpot><MapButton aria-label="Attribution">i</MapButton></InfoSpot>
    </MapFrame>
  );
};

/* ---------- icons ---------- */

const HelpIcon = () => (
  <svg width="14" height="14" viewBox="0 0 24 24" fill="none" stroke="currentColor" strokeWidth="2" strokeLinecap="round">
    <circle cx="12" cy="12" r="10.5" />
    <path d="M9.5 9.6a2.6 2.6 0 1 1 3.8 2.3c-.8.4-1.3.9-1.3 1.7M12 16.6v.2" />
  </svg>
);

const ClockIcon = () => (
  <svg width="14" height="14" viewBox="0 0 24 24" fill="none" stroke="currentColor" strokeWidth="2" strokeLinecap="round">
    <circle cx="12" cy="12" r="10.5" />
    <path d="M12 6v6H8.5" />
  </svg>
);

const AddPanelIcon = () => (
  <svg width="15" height="11" viewBox="0 0 15 11">
    <path d="M0 3h2v7H0zM3 1h2v9H3zM6 4h1.500v6H6zM8.300 1h1.700v9H8.300z" fill="#6e9fff" />
    <path d="M12.500 3v5M10 5.500h5" stroke="#ffab40" strokeWidth="1.600" />
  </svg>
);

const Avatar = () => (
  <svg width="20" height="20" viewBox="0 0 20 20" role="img" aria-label="Profile">
    <clipPath id="av"><circle cx="10" cy="10" r="10" /></clipPath>
    <g clipPath="url(#av)">
      <path fill="#4c6b0b" d="M0 0h20v20H0z" />
      <path fill="#ff9380" d="M6 2h2v3h4V2h2v7h-2V7H8v2H6zM2 10h3v2h2v4h6v-4h2v-2h3v6h-3v2H5v-2H2zM8 10h4v2H8zM8 13h4v2H8z" />
    </g>
  </svg>
);

const Dots = () => (
  <svg width="7" height="16" viewBox="0 0 7 16" fill="#3e4047">
    {[0, 1, 2, 3].map((i) => <path key={i} d={`M0 ${i * 4 + 1}h2v2H0zM4 ${i * 4 + 1}h2v2H4z`} />)}
  </svg>
);

/* ---------- app ---------- */

export default function App() {
  return (
    <>
      <Global />
      <TopBar>
        <Logo href="#home">dv</Logo>
        <SearchBox>
          <Search size={12} />
          <SearchInput type="text" placeholder="Search or jump to..." aria-label="Search or jump to" />
          <Hint><Keyboard size={13} />cmd+k</Hint>
        </SearchBox>
        <Group $end>
          <ToolButton aria-label="New"><Plus size={14} /><ChevronDown size={10} /></ToolButton>
          <Divider />
          <ToolButton aria-label="Help"><HelpIcon /></ToolButton>
          <Group $gap={0}><Avatar /></Group>
        </Group>
      </TopBar>
      <NavBar>
        <Group>
          <ToolButton aria-label="Menu"><Bars /></ToolButton>
          <HomeLink href="#home">Home</HomeLink>
        </Group>
        <Group>
          <Group $gap={3}>
            <ToolButton $blue><AddPanelIcon />Add<ChevronDown size={11} /></ToolButton>
            <ToolButton aria-label="Settings"><Settings size={14} /></ToolButton>
            <ToolButton><ClockIcon />Last 30 days<ChevronDown size={11} /></ToolButton>
          </Group>
          <Group $gap={4}>
            <ToolButton aria-label="Zoom out time range"><ZoomOut size={14} /></ToolButton>
            <ToolButton aria-label="Refresh"><RefreshCcw size={14} /></ToolButton>
          </Group>
          <ToolButton>10s<ChevronDown size={11} /></ToolButton>
          <Divider />
          <ToolButton aria-label="Hide controls"><ChevronUp size={12} /></ToolButton>
        </Group>
      </NavBar>
      <Page>
        <Variables>
          <VarLabel htmlFor="domain">From Domain</VarLabel>
          <SelectWrap>
            <Select id="domain" defaultValue="All"><option>All</option></Select>
            <ChevronDown size={9} />
          </SelectWrap>
          <VarLabel htmlFor="add-filter" $spaced>Filters</VarLabel>
          <AddFilter id="add-filter" aria-label="Add filter"><Plus size={13} /></AddFilter>
        </Variables>
        <RowHead $filled $h={25}>
          <RowToggle><ChevronRight size={10} />Guide<RowNote>(1 panel)</RowNote></RowToggle>
          <Dots />
        </RowHead>
        <RowHead $h={25}>
          <RowToggle><ChevronDown size={10} />DMARC Summary</RowToggle>
        </RowHead>
        <Grid>
          <Pie id="p1" title="SPF Alignment" angle={42.4} big="red" labels={['SPF not aligned', 'SPF aligned']} />
          <Pie id="p2" title="DKIM Alignment" angle={16.4} big="green" labels={['DKIM aligned', 'DKIM not aligned']} />
          <Pie id="p3" title="DMARC Passage" angle={14.9} big="green" labels={['DMARC Passed', 'DMARC Failed']} />
          <Charts />
          <Stack $span={12}>
            <StatBox>
              <Spark viewBox="0 0 533 118" preserveAspectRatio="none">
                <path d="M441 117L460 115L478 99L495 58L513 117Z" fill="#82a6d2" />
                <path d="M0 117H441L460 115L478 99L495 58L513 117H533" fill="none" stroke="#6ba5e6" />
              </Spark>
              <StatText>
                <StatName>Total Message Count</StatName>
                <StatValue>133,742</StatValue>
              </StatText>
            </StatBox>
            <Panel title="Reporting Organisations" span={12} h={334}>
              <Table closed rows={orgRows} cols={[{ h: 'Reporting Organisation', w: 148 }, { h: 'Org Contact Info', w: 185 }, { h: 'Messages', end: true, hpad: 5, sort: true, slot: 50 }]} />
            </Panel>
          </Stack>
          <Stack $span={12}>
            <Panel title="Top 2000 Message Sources by Reverse DNS" span={12} h={242}>
              <Table rows={dnsRows} cols={[{ h: 'Reverse DNS Base' }, { h: 'Messages', end: true, hpad: 5, sort: true, slot: 52 }]} />
            </Panel>
            <Panel title="Message Volume by Header From" span={12} h={210}>
              <Table rows={volumeRows} cols={[{ h: 'Header From' }, { h: 'Messages', end: true, hpad: 5, sort: true, slot: 52 }]} />
            </Panel>
          </Stack>
          <Panel title="Map of Message Source Countries" span={16} h={304}>
            <WorldMap w={711} h={276} lon0={42.5} eq={163} k={2.145}
              marks={[[35, 19], [25, 26], [54, 31], [64, 34], [47, 50], [60, 49], [73, 47], [69, 63], [158, 90], [159, 112], [317, 77], [341, 79], [289, 114], [303, 111], [266, 160], [331, 220], [419, 260], [590, 16], [612, 77]]}
              labels={[[195, 65, 'ASIA'], [102, 143, 'AFRICA'], [193, 180, 'Indian', true], [193, 191, 'Ocean', true], [412, 211, 'OCEAN'], [611, 40, 'NORTH'], [611, 53, 'AMERICA'], [688, 187, 'SOUTH'], [688, 200, 'AMERICA']]} />
          </Panel>
          <Panel title="Message Source Countries" span={8} h={304}>
            <Table rows={countryRows} cols={[{ h: 'Country', w: 57 }, { h: 'Messages', end: true, hpad: 5, sort: true, slot: 56 }]} />
          </Panel>
          <Panel title="Overview" span={24} h={272}>
            <Table rows={overviewRows} cols={[
              { h: 'Sending Domain', w: 122 }, { h: 'PTR', w: 122 }, { h: 'Source IP', w: 98 }, { h: 'Country', w: 53 }, { h: 'Disposition', w: 86 }, { h: 'SPF', w: 46 }, { h: 'DKIM', w: 50 },
              { h: 'Reporter', w: 122 }, { h: 'SPF Auth Results', w: 94 }, { h: 'DKIM Auth Results', w: 100 }, { h: 'Email Domain', w: 122 }, { h: 'Messages', w: 122 },
            ]} />
          </Panel>
          <Panel title="Published Policies (as reported)" span={24} h={272}>
            <Table rows={policyRows} cols={[
              { h: 'Domain', w: 199 }, { h: 'DKIM Policy', w: 81 }, { h: 'SPF Policy', w: 99 }, { h: 'Forensic Policy', w: 102, end: true, pad: 7 }, { h: 'Policy', w: 74 },
              { h: 'Percentage', w: 73, end: true, hot: true, pad: 7 }, { h: 'Subdomain Policy', w: 104 }, { h: 'Messages', sort: true, slot: 66 },
            ]} />
          </Panel>
          <Panel title="Top 1000 Message Source IP Addresses" span={24} h={272}>
            <Table rows={ipRows} cols={[{ h: 'IP Address', w: 114 }, { h: 'Reverse DNS', w: 308 }, { h: 'Base Domain', w: 245, link: true }, { h: 'Country', w: 65 }, { h: 'Messages', sort: true, slot: 66 }]} />
          </Panel>
          <Panel title="SPF Alignment Details" span={24} h={272}>
            <Table rows={spfRows} cols={[{ h: 'Header From', w: 146 }, { h: 'Envelope From', w: 147 }, { h: 'SPF Result', w: 146 }, { h: 'SPF Aligned', w: 147 }, { h: 'Reverse DNS Base', w: 146, link: true }, { h: 'Messages', sort: true, slot: 66 }]} />
          </Panel>
          <Panel title="DKIM Alignment Details" span={24} h={272}>
            <Table rows={dkimRows} cols={[{ h: 'Header From', w: 122 }, { h: 'DKIM Selector', w: 260, link: true }, { h: 'DKIM Domain', w: 122 }, { h: 'DKIM Result', w: 122 }, { h: 'DKIM Aligned', w: 122 }, { h: 'Reverse DNS Base', w: 122, link: true }, { h: 'Messages', w: 250, sort: true }]} />
          </Panel>
        </Grid>
        <RowHead $h={26}>
          <RowToggle><ChevronDown size={10} />DMARC Forensic</RowToggle>
        </RowHead>
        <Grid>
          <Panel title="Forensic Samples" span={24} h={272}>
            <Table rows={forensicRows} cols={[
              { h: 'arrival_date', w: 124, end: true, pad: 2 }, { h: 'From', w: 124 }, { h: 'To', w: 125 }, { h: 'ReplyTo', w: 100 }, { h: 'AuthFailure', w: 69 }, { h: 'Subject', w: 124 },
              { h: 'DeliveryResult', w: 84 }, { h: 'Auth Results', w: 125 }, { h: 'Received', w: 125 }, { h: 'Count', end: true, hpad: 2 },
            ]} />
          </Panel>
          <Panel title="Forensic Sample Sources by Country" span={8} h={334}>
            <WorldMap w={351} h={306} lon0={175} eq={153} k={1.1545} marks={[[64, 107], [330, 184]]}
              labels={[[49, 79, 'NORTH'], [49, 90, 'AMERICA'], [278, 84, 'ASIA'], [196, 140, 'AFRICA'], [105, 173, 'SOUTH'], [105, 183, 'AMERICA']]} />
          </Panel>
          <Panel title="DMARC Forensic Sample Sourc…" span={5} h={334}>
            <Table rows={[['US', { bar: 100, v: '11' }], ['AU', { bar: 0, v: '1' }]]} cols={[{ h: 'Country', w: 57 }, { h: 'Count', end: true, hpad: 3, slot: 28 }]} />
          </Panel>
          <Panel title="Top 1000 Forensic Sample Source IP Addresses" span={11} h={334}>
            <Table
              rows={[
                ['167.89.76.229', m(7, -3, '.54.43.2.55.', '5656655678876'), b(7, 0, '.1332.2331.', '776536673747'), 'US', { bar: 100, v: '' }],
                ['40.95.96.69', 'mail-me3aus01rl…', 'outlook.com', 'AU', { bar: 0, v: '' }],
                ['198.2.182.211', 'mail211.suw16.rs…', 'rsgsv.net', 'US', { bar: 0, v: '' }],
              ]}
              cols={[{ h: 'IP Address', w: 122 }, { h: 'Reverse DNS', w: 122 }, { h: 'Base Domain', w: 122, link: true }, { h: 'Country', w: 57 }, { h: 'Messages', w: 110, end: true, hpad: 7 }]} />
          </Panel>
        </Grid>
      </Page>
    </>
  );
}
